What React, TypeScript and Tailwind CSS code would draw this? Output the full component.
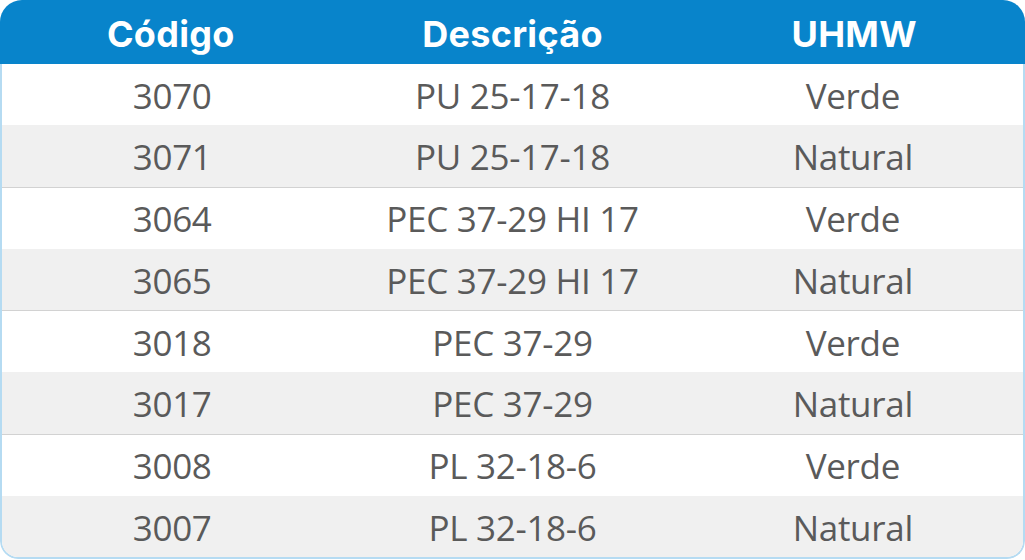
import React from "react";

const rows = [
  ["3070", "PU 25-17-18", "Verde"],
  ["3071", "PU 25-17-18", "Natural"],
  ["3064", "PEC 37-29 HI 17", "Verde"],
  ["3065", "PEC 37-29 HI 17", "Natural"],
  ["3018", "PEC 37-29", "Verde"],
  ["3017", "PEC 37-29", "Natural"],
  ["3008", "PL 32-18-6", "Verde"],
  ["3007", "PL 32-18-6", "Natural"],
];

export default function App() {
  return (
    <div className="w-[1025px] h-[560px] bg-white">
      <div className="w-[1025px] h-[559px] rounded-t-[22px] rounded-b-[18px] overflow-hidden flex flex-col">
        <div
          className="h-[64px] bg-[#0884cb] grid grid-cols-3 items-center text-white text-[36px] tracking-[0.3px] font-bold shrink-0 pt-[3px]"
          style={{ fontFamily: "Inter, 'Open Sans', sans-serif" }}
        >
          <div className="text-center">Código</div>
          <div className="text-center">Descrição</div>
          <div className="text-center">UHMW</div>
        </div>
        <div className="flex-1 flex flex-col border-x-2 border-b-2 border-[#b5dbf2] rounded-b-[18px] overflow-hidden">
          {rows.map((r, i) => (
            <div
              key={i}
              className={
                "flex-1 grid grid-cols-3 items-center text-[35px] tracking-[-0.3px] text-[#5a5a5a] pt-[3px] " +
                (i % 2 === 1 ? "bg-[#f0f0f0] " : "bg-white ") +
                (i % 2 === 1 && i < rows.length - 1 ? "border-b border-[#d2d2d2]" : "")
              }
              style={{ fontFamily: "'Open Sans', sans-serif" }}
            >
              <div className="text-center">{r[0]}</div>
              <div className="text-center">{r[1]}</div>
              <div className="text-center">{r[2]}</div>
            </div>
          ))}
        </div>
      </div>
    </div>
  );
}
